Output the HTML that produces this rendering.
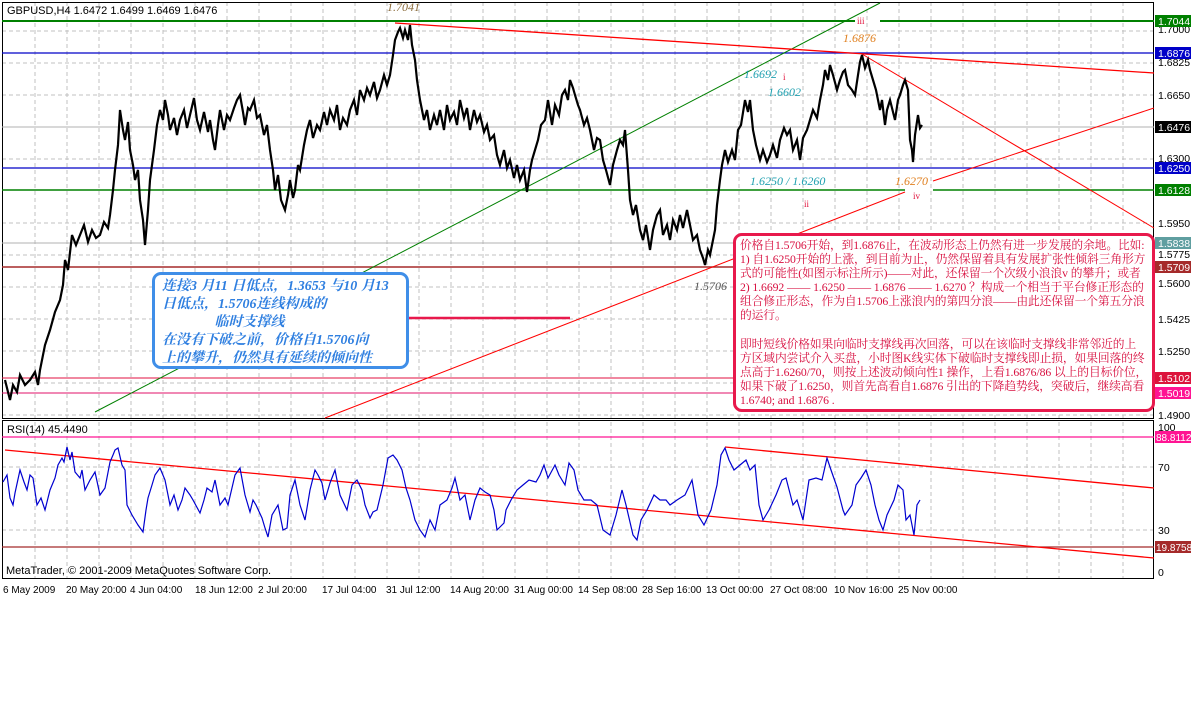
<!DOCTYPE html>
<html><head><meta charset="utf-8"><style>
body{margin:0;background:#fff;width:1191px;height:708px;overflow:hidden;position:relative;font-family:"Liberation Sans","Noto Sans CJK SC",sans-serif}
svg{position:absolute;left:0;top:0}
.bbox{position:absolute;left:152px;top:272px;width:244px;height:88px;border:3px solid #3f8ee8;border-radius:9px;background:#fff;color:#2f7fe0;font-family:"Liberation Serif","Noto Serif CJK SC",serif;font-style:italic;font-weight:bold;font-size:14px;line-height:18px;padding:3px 0 0 7px;box-sizing:content-box;white-space:nowrap}
.rbox{position:absolute;left:733px;top:233px;width:410px;height:170px;border:3px solid #e8194c;border-radius:9px;background:#fff;color:#d81040;font-family:"Liberation Serif","Noto Serif CJK SC",serif;font-size:11.75px;line-height:14.1px;padding:3px 2px 0 4px;white-space:nowrap;overflow:hidden;letter-spacing:-0.1px}
</style></head><body>
<svg width="1191" height="708" font-family="Liberation Sans, sans-serif" font-size="11">
<g stroke="#c0c0c0" stroke-dasharray="4,3" stroke-width="1">
<path d="M35 2V578M67 2V578M99 2V578M131 2V578M163 2V578M195 2V578M227 2V578M259 2V578M291 2V578M323 2V578M355 2V578M387 2V578M419 2V578M451 2V578M483 2V578M515 2V578M547 2V578M579 2V578M611 2V578M643 2V578M675 2V578M707 2V578M739 2V578M771 2V578M803 2V578M835 2V578M867 2V578M899 2V578M931 2V578M963 2V578M995 2V578M1027 2V578M1059 2V578M1091 2V578M1123 2V578"/>
<path d="M2 31H1154M2 63H1154M2 95H1154M2 159H1154M2 223H1154M2 255H1154M2 287H1154M2 319H1154M2 351H1154M2 383H1154M2 415H1154M2 467H1154M2 530H1154"/>
</g>
<rect x="2.5" y="2.5" width="1151" height="416" fill="none" stroke="#000"/>
<rect x="2.5" y="420.5" width="1151" height="158" fill="none" stroke="#000"/>
<line x1="2" y1="127" x2="1154" y2="127" stroke="#b0b0b0"/>
<line x1="2" y1="243" x2="1154" y2="243" stroke="#b0b0b0"/>
<path d="M2 21H855M880 21H1154" stroke="#008000" stroke-width="2"/>
<path d="M2 190H905M933 190H1154" stroke="#008000" stroke-width="1.5"/>
<line x1="2" y1="53" x2="1154" y2="53" stroke="#0000c8" stroke-width="1.2"/>
<line x1="2" y1="168" x2="1154" y2="168" stroke="#0000c8" stroke-width="1.2"/>
<line x1="2" y1="267" x2="1154" y2="267" stroke="#a52a2a" stroke-width="1.5"/>
<line x1="2" y1="378" x2="1154" y2="378" stroke="#e01040" stroke-width="1"/>
<line x1="2" y1="393" x2="1154" y2="393" stroke="#e0106a" stroke-width="1"/>
<line x1="95" y1="412" x2="880" y2="3" stroke="#008000" stroke-width="1"/>
<line x1="395" y1="23" x2="1154" y2="73" stroke="#ff0000" stroke-width="1.3"/>
<line x1="862" y1="54" x2="1154" y2="228" stroke="#ff0000" stroke-width="1"/>
<path d="M325 418L905 192M933 181L1154 108" stroke="#ff0000" stroke-width="1"/>
<line x1="322" y1="318" x2="570" y2="318" stroke="#e8194c" stroke-width="2.5"/>
<polyline fill="none" stroke="#000" stroke-width="2.2" points="5,380 8,392 10,400 13,385 17,392 20,375 25,385 30,380 35,372 38,385 40,370 45,345 50,330 55,312 60,300 63,285 65,260 68,270 72,235 76,245 80,235 84,225 88,242 92,230 96,238 100,235 104,222 108,228 110,215 113,190 115,170 118,145 120,110 123,130 125,140 128,122 130,150 133,165 135,180 138,170 140,200 143,220 145,245 148,210 150,180 154,150 157,125 160,110 163,120 165,100 168,115 170,130 174,118 177,135 180,120 184,110 187,128 190,115 194,98 197,120 200,130 204,112 208,132 210,120 213,140 215,150 218,125 220,110 224,130 227,115 230,120 234,108 237,100 240,95 243,112 245,125 248,108 250,110 254,100 257,118 260,115 264,135 267,125 270,150 273,170 275,190 278,175 281,200 285,210 288,195 290,180 293,198 295,190 298,165 300,170 304,145 307,130 310,120 313,138 317,125 320,130 324,112 327,125 330,110 334,120 337,105 340,130 343,118 347,125 350,110 354,100 357,115 360,90 364,100 367,88 370,95 374,82 377,98 380,90 384,75 387,85 390,75 393,55 395,40 398,32 400,28 403,38 405,30 408,40 410,25 412,45 415,60 417,80 420,100 424,120 427,110 430,130 434,115 437,125 440,110 444,130 447,105 450,120 454,112 457,125 460,100 464,118 467,108 470,130 474,110 477,122 480,115 484,132 487,125 490,140 494,135 497,155 500,165 504,150 507,168 510,160 514,178 517,165 520,180 524,170 527,192 530,170 532,160 535,150 538,140 541,125 545,120 548,100 552,125 555,105 559,115 562,95 565,90 568,100 570,80 573,88 575,95 578,105 580,110 584,125 587,118 590,130 594,150 597,138 600,140 603,160 606,170 610,185 613,165 617,150 620,140 623,145 625,130 628,170 630,200 633,215 636,205 640,230 643,240 646,225 650,250 653,230 657,215 660,210 663,235 667,225 670,240 673,220 677,230 680,215 683,228 687,210 690,225 693,240 697,235 700,250 703,258 705,265 708,250 710,255 713,240 715,230 717,205 720,180 722,165 725,150 728,162 732,150 735,160 738,130 741,125 745,100 748,112 750,100 753,130 756,145 760,160 763,150 767,162 770,155 773,145 777,158 780,140 784,128 787,135 790,130 793,150 797,140 800,160 803,138 807,130 810,120 813,110 817,118 820,100 823,85 825,70 828,80 830,65 833,75 837,90 840,80 843,72 845,70 848,85 852,90 855,95 858,75 860,62 862,55 865,68 868,60 870,70 873,80 876,90 880,110 882,100 885,125 887,110 890,100 893,112 895,120 898,100 900,95 903,85 905,80 908,90 910,140 912,150 913,162 915,135 918,115 920,128 922,125"/>
<line x1="2" y1="437" x2="1154" y2="437" stroke="#ff1493" stroke-width="1.3"/>
<line x1="2" y1="547" x2="1154" y2="547" stroke="#a52a2a" stroke-width="1.2"/>
<line x1="5" y1="450" x2="1154" y2="558" stroke="#ff0000" stroke-width="1.3"/>
<line x1="725" y1="447" x2="1154" y2="488" stroke="#ff0000" stroke-width="1.3"/>
<polyline fill="none" stroke="#0000d0" stroke-width="1.2" points="3,482 7,475 10,498 13,505 15,493 20,470 24,482 27,490 30,475 33,478 37,505 41,498 45,510 50,490 55,478 58,465 62,458 64,462 67,447 70,460 72,452 75,472 80,478 82,470 85,490 90,480 95,472 100,495 105,488 110,462 113,455 115,450 118,448 122,465 125,470 127,505 132,515 138,525 143,532 146,510 148,498 152,485 155,475 160,468 165,480 170,505 174,495 178,510 182,500 185,488 190,495 193,500 200,513 204,500 207,488 212,492 215,480 220,505 225,498 228,505 235,475 240,468 245,495 250,512 253,500 256,505 262,518 265,528 268,537 272,515 278,505 283,530 287,528 290,495 295,480 300,505 305,520 310,490 315,470 318,475 322,483 325,500 330,483 335,470 340,495 347,510 352,485 357,480 362,490 365,505 370,518 373,512 377,510 383,485 388,458 393,455 397,460 402,470 406,488 410,500 415,520 420,530 425,537 430,520 435,530 440,505 447,500 452,488 455,478 460,500 465,495 470,520 475,500 480,488 485,492 490,495 494,510 497,530 504,523 506,510 511,500 517,490 523,485 529,480 536,482 540,475 544,465 548,478 555,465 559,475 565,485 569,463 574,470 578,490 584,500 591,500 597,505 603,530 610,535 616,515 622,490 626,505 633,535 637,540 641,520 647,510 654,495 660,500 666,500 670,505 677,500 685,495 692,480 698,515 704,525 711,510 717,485 721,455 725,448 729,460 734,470 740,465 746,460 750,470 755,465 759,505 763,520 769,510 776,495 782,480 786,478 793,505 797,500 803,520 809,480 816,478 822,480 827,458 831,470 837,487 843,510 845,515 852,505 856,485 861,478 866,470 871,485 875,505 879,520 883,530 887,515 894,500 898,485 903,490 906,520 910,515 914,535 917,505 920,500"/>
<text x="7" y="14" fill="#000">GBPUSD,H4  1.6472 1.6499 1.6469 1.6476</text>
<text x="7" y="433" fill="#000">RSI(14) 45.4490</text>
<text x="6" y="574" fill="#000">MetaTrader, © 2001-2009 MetaQuotes Software Corp.</text>
<g font-family="Liberation Serif, serif" font-style="italic" font-size="12">
<text x="387" y="11" fill="#8b6b3a">1.7041</text>
<text x="843" y="42" fill="#e08020">1.6876</text>
<text x="744" y="78" fill="#20a0b0">1.6692</text>
<text x="768" y="96" fill="#20a0b0">1.6602</text>
<text x="750" y="185" fill="#20a0b0">1.6250 / 1.6260</text>
<text x="895" y="185" fill="#e08020">1.6270</text>
<text x="694" y="290" fill="#555">1.5706</text>
</g>
<g fill="#e0103a" font-size="9" font-family="Liberation Serif, serif">
<text x="857" y="24">iii</text><text x="783" y="80">i</text><text x="804" y="207">ii</text><text x="913" y="199">iv</text>
</g>
<g font-size="10.5" fill="#000">
<text x="1158" y="33">1.7000</text><text x="1158" y="66">1.6825</text><text x="1158" y="99">1.6650</text><text x="1158" y="162">1.6300</text><text x="1158" y="227">1.5950</text><text x="1158" y="258">1.5775</text><text x="1158" y="287">1.5600</text><text x="1158" y="323">1.5425</text><text x="1158" y="355">1.5250</text><text x="1158" y="419">1.4900</text>
<text x="1158" y="431">100</text><text x="1158" y="471">70</text><text x="1158" y="534">30</text><text x="1158" y="576">0</text>
</g>
<g font-size="10.5" fill="#fff">
<rect x="1155" y="15" width="36" height="12" fill="#008000"/><text x="1158" y="25">1.7044</text>
<rect x="1155" y="47" width="36" height="12" fill="#0000c8"/><text x="1158" y="57">1.6876</text>
<rect x="1155" y="121" width="36" height="12" fill="#000"/><text x="1158" y="131">1.6476</text>
<rect x="1155" y="162" width="36" height="12" fill="#0000c8"/><text x="1158" y="172">1.6250</text>
<rect x="1155" y="184" width="36" height="12" fill="#008000"/><text x="1158" y="194">1.6128</text>
<rect x="1155" y="237" width="36" height="12" fill="#5f9ea0"/><text x="1158" y="247">1.5838</text>
<rect x="1155" y="261" width="36" height="12" fill="#a52a2a"/><text x="1158" y="271">1.5709</text>
<rect x="1155" y="372" width="36" height="12" fill="#dc143c"/><text x="1158" y="382">1.5102</text>
<rect x="1155" y="387" width="36" height="12" fill="#ff1493"/><text x="1158" y="397">1.5019</text>
<rect x="1155" y="431" width="36" height="12" fill="#ff1493"/><text x="1156" y="441" font-size="10">88.8112</text>
<rect x="1155" y="541" width="36" height="12" fill="#a52a2a"/><text x="1156" y="551" font-size="10">19.8758</text>
</g>
<g font-size="10" fill="#000">
<text x="3" y="593">6 May 2009</text><text x="66" y="593">20 May 20:00</text><text x="130" y="593">4 Jun 04:00</text><text x="195" y="593">18 Jun 12:00</text><text x="258" y="593">2 Jul 20:00</text><text x="322" y="593">17 Jul 04:00</text><text x="386" y="593">31 Jul 12:00</text><text x="450" y="593">14 Aug 20:00</text><text x="514" y="593">31 Aug 00:00</text><text x="578" y="593">14 Sep 08:00</text><text x="642" y="593">28 Sep 16:00</text><text x="706" y="593">13 Oct 00:00</text><text x="770" y="593">27 Oct 08:00</text><text x="834" y="593">10 Nov 16:00</text><text x="898" y="593">25 Nov 00:00</text>
</g>
</svg>
<div class="bbox">连接3 月11 日低点，1.3653 与10 月13<br>日低点，1.5706连线构成的<br>&nbsp;&nbsp;&nbsp;&nbsp;&nbsp;&nbsp;&nbsp;&nbsp;&nbsp;&nbsp;&nbsp;&nbsp;&nbsp;&nbsp;&nbsp;临时支撑线<br>在没有下破之前，价格自1.5706向<br>上的攀升，仍然具有延续的倾向性</div>
<div class="rbox">价格自1.5706开始，到1.6876止，在波动形态上仍然有进一步发展的余地。比如:<br>1) 自1.6250开始的上涨，到目前为止，仍然保留着具有发展扩张性倾斜三角形方<br>式的可能性(如图示标注所示)——对此，还保留一个次级小浪浪v 的攀升；或者<br>2) 1.6692 —— 1.6250 —— 1.6876 —— 1.6270 ？构成一个相当于平台修正形态的<br>组合修正形态，作为自1.5706上涨浪内的第四分浪——由此还保留一个第五分浪<br>的运行。<br><br>即时短线价格如果向临时支撑线再次回落，可以在该临时支撑线非常邻近的上<br>方区域内尝试介入买盘，小时图K线实体下破临时支撑线即止损，如果回落的终<br>点高于1.6260/70，则按上述波动倾向性1 操作，上看1.6876/86 以上的目标价位，<br>如果下破了1.6250，则首先高看自1.6876 引出的下降趋势线，突破后，继续高看<br>1.6740; and 1.6876 .</div>
</body></html>
